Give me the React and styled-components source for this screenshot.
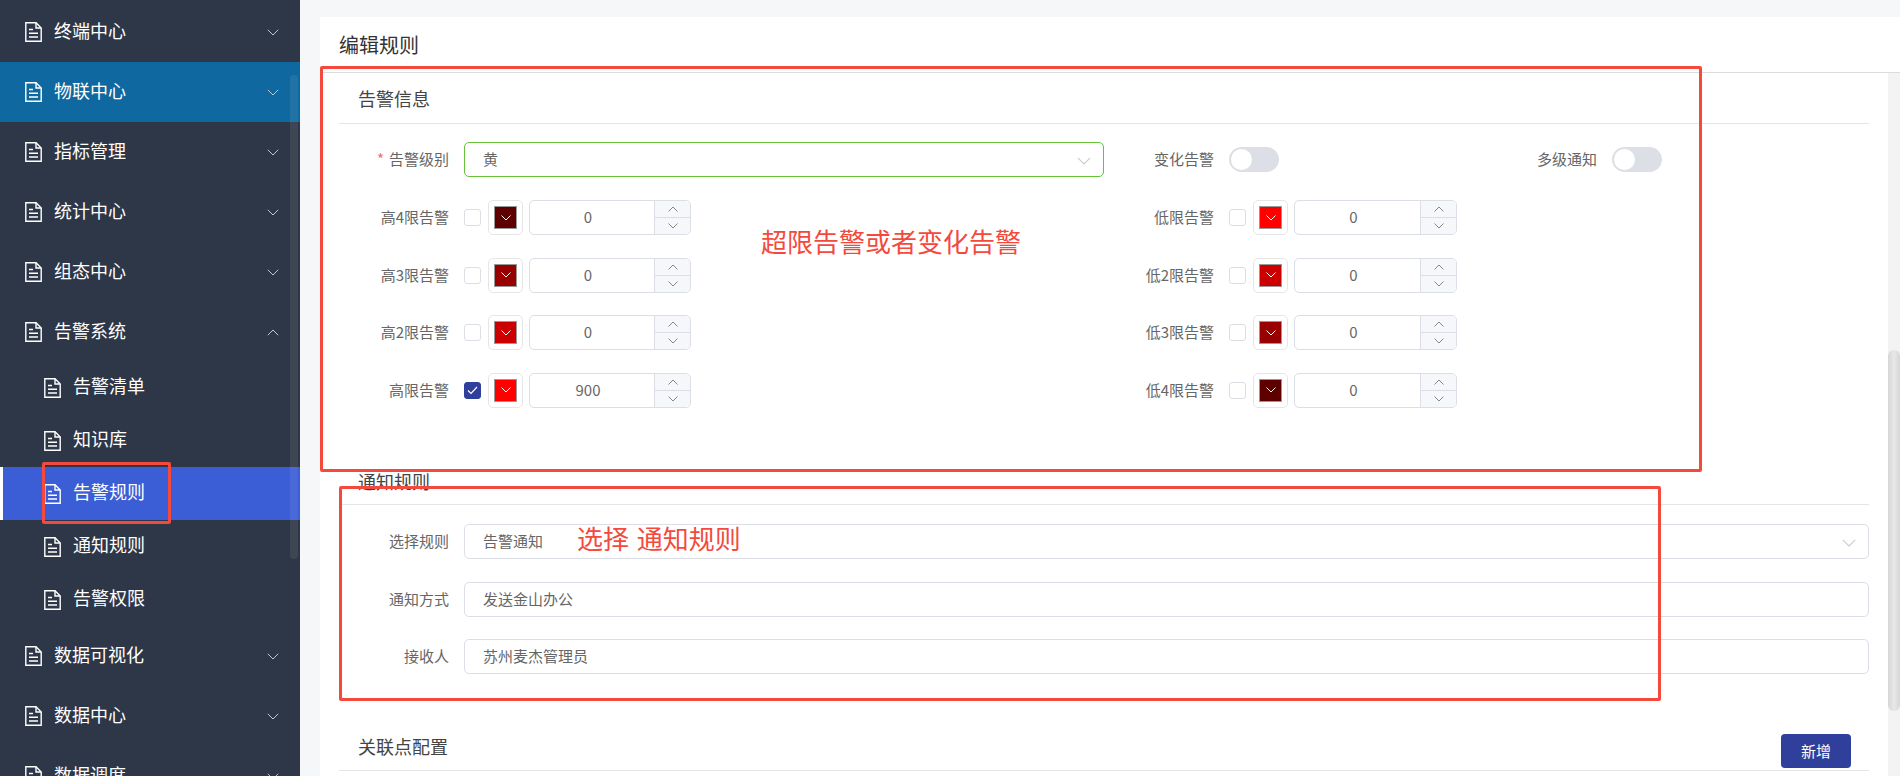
import React from "react";
import styled, { createGlobalStyle } from "styled-components";

const FONT = `"Noto Sans CJK SC", "Noto Sans", "Liberation Sans", sans-serif`;

const GlobalStyle = createGlobalStyle`
  html, body {
    margin: 0;
    height: 100%;
    overflow: hidden;
    font-family: ${FONT};
  }
  * {
    box-sizing: border-box;
  }
`;

const Shell = styled.div`
  position: relative;
  display: flex;
  width: 100%;
  height: 100vh;
  overflow: hidden;
`;

/* sidebar */
const Sidebar = styled.aside`
  position: relative;
  flex: 0 0 300px;
  padding-top: 2px;
  background: #2e3748;
  overflow: hidden;
`;

const SidebarThumb = styled.div`
  position: absolute;
  top: 75px;
  left: 290px;
  width: 8px;
  height: 484px;
  border-radius: 4px;
  background: rgba(255, 255, 255, 0.08);
`;

const MenuRow = styled.div`
  display: flex;
  align-items: center;
  height: 60px;
  padding-left: 25px;
  color: #fff;
  font-size: 18px;
  background: ${(p) => (p.$active ? "#0f689f" : "transparent")};
`;

const SubList = styled.div`
  margin-top: -1px;
`;

const SubRow = styled.div`
  display: flex;
  align-items: center;
  height: 53px;
  padding-left: ${(p) => (p.$active ? "41px" : "44px")};
  color: #fff;
  font-size: 18px;
  background: ${(p) => (p.$active ? "#3b5dd5" : "transparent")};
  border-left: ${(p) => (p.$active ? "3px solid #fff" : "none")};
`;

const MenuLabel = styled.span`
  flex: 1;
  margin-left: 12px;
  padding-bottom: 5px;
`;

const Chevron = styled.svg`
  flex: 0 0 auto;
  margin-right: 21px;
`;

const DocIcon = () => (
  <svg width="17" height="20" viewBox="0 0 17 20" fill="none" stroke="#fff" strokeWidth="1.4">
    <path d="M.8.8h10.2l5.2 5.2v13.2H.8z" />
    <path d="M11 .8V6h5.2" />
    <path d="M4 7.5h4M4 11.2h9M4 15h9" />
  </svg>
);

const MenuArrow = ({ up }) => (
  <Chevron width="12" height="7" viewBox="0 0 12 7" fill="none" stroke="#c3c7cf" strokeWidth="1">
    <path d={up ? "M.8 6.2 6 1l5.2 5.2" : "M.8.8 6 6l5.2-5.2"} />
  </Chevron>
);

const MenuItem = ({ label, active, up }) => (
  <MenuRow $active={active}>
    <DocIcon />
    <MenuLabel>{label}</MenuLabel>
    <MenuArrow up={up} />
  </MenuRow>
);

const SubItem = ({ label, active }) => (
  <SubRow $active={active}>
    <DocIcon />
    <MenuLabel>{label}</MenuLabel>
  </SubRow>
);

/* main */
const Main = styled.main`
  flex: 1;
  display: flex;
  flex-direction: column;
  min-width: 0;
  padding: 17px 0 0 20px;
  background: #f6f7f9;
`;

const Card = styled.div`
  flex: 1;
  display: flex;
  flex-direction: column;
  min-height: 0;
  background: #fff;
`;

const CardHeader = styled.div`
  flex: 0 0 56px;
  display: flex;
  align-items: center;
  padding: 0 19px 1px;
  font-size: 20px;
  color: #333;
  border-bottom: 1px solid #dcdcdc;
`;

const CardBody = styled.div`
  flex: 1;
  display: flex;
  min-height: 0;
  overflow: hidden;
`;

const Content = styled.div`
  flex: 1;
  min-width: 0;
  padding: 0 19px;
`;

const ScrollTrack = styled.div`
  flex: 0 0 12px;
  padding-top: 277px;
  background: #f3f3f3;
`;

const ScrollThumb = styled.div`
  height: 361px;
  border-radius: 6px;
  background: linear-gradient(90deg, #d6d6d6, #e8e8e8 50%, #d6d6d6);
`;

const TitleRow = styled.div`
  display: flex;
  align-items: flex-end;
  justify-content: space-between;
  height: ${(p) => p.$height || 51}px;
  padding: 0 18px 0 19px;
  border-bottom: 1px solid #e4e5e8;
`;

const SectionTitle = styled.h3`
  margin: 0;
  padding-bottom: ${(p) => p.$lift || 14}px;
  font-size: 18px;
  font-weight: 400;
  line-height: 20px;
  color: #444;
`;

const AddButton = styled.button`
  width: 70px;
  height: 34px;
  margin-bottom: 2px;
  padding: 0 0 2px;
  border: 0;
  border-radius: 4px;
  background: #303f9b;
  color: #fff;
  font-family: ${FONT};
  font-size: 15px;
`;

const LevelGrid = styled.div`
  display: grid;
  grid-template-columns: 765px 383px 1fr;
  margin-top: 18px;
`;

const LimitGrid = styled.div`
  display: grid;
  grid-template-columns: 765px 1fr;
  row-gap: 22.5px;
  margin-top: 23px;
`;

const NotifyStack = styled.div`
  display: flex;
  flex-direction: column;
  gap: 22.5px;
  margin: 19px 0 46px;
`;

const Field = styled.div`
  display: grid;
  grid-template-columns: 110px 1fr;
  column-gap: 15px;
  align-items: center;
  height: 35px;
`;

const Label = styled.label`
  padding-bottom: 2px;
  text-align: right;
  font-size: 15px;
  color: #666;
`;

const Required = styled.span`
  margin-right: 5px;
  color: #f56c6c;
`;

const TextBox = styled.div`
  display: flex;
  align-items: center;
  justify-content: space-between;
  height: 35px;
  padding: 0 12px 2px 18px;
  border: 1px solid ${(p) => (p.$focus ? "#67c23a" : "#dcdee6")};
  border-radius: 5px;
  background: #fff;
  font-size: 15px;
  color: #666;
`;

const SelectIcon = styled.svg`
  margin-top: 4px;
`;

const Switch = styled.div`
  width: 50px;
  height: 25px;
  padding: 2px;
  border-radius: 13px;
  background: #dcdfe6;
`;

const SwitchKnob = styled.div`
  width: 21px;
  height: 21px;
  border-radius: 50%;
  background: #fff;
`;

const Limit = styled.div`
  display: flex;
  align-items: center;
`;

const CheckBox = styled.div`
  display: flex;
  align-items: center;
  justify-content: center;
  width: 17px;
  height: 17px;
  margin-right: 7px;
  border: 1px solid ${(p) => (p.$checked ? "#303f9b" : "#dcdee6")};
  border-radius: 3px;
  background: ${(p) => (p.$checked ? "#303f9b" : "#fff")};
`;

const ColorBox = styled.div`
  display: flex;
  align-items: center;
  justify-content: center;
  width: 35px;
  height: 35px;
  margin-right: 6px;
  border: 1px solid #e6e6e6;
  border-radius: 5px;
`;

const ColorSwatch = styled.div`
  display: flex;
  align-items: center;
  justify-content: center;
  width: 23px;
  height: 23px;
  border: 1px solid #999;
  background: ${(p) => p.$color};
`;

const NumberBox = styled.div`
  display: flex;
  width: ${(p) => (p.$wide ? 163 : 162)}px;
  height: 35px;
  border: 1px solid #dcdee6;
  border-radius: 5px;
  overflow: hidden;
`;

const NumberValue = styled.div`
  flex: 1;
  display: flex;
  align-items: center;
  justify-content: center;
  padding: 0 8px 2px 0;
  font-size: 15px;
  color: #666;
`;

const Stepper = styled.div`
  flex: 0 0 36px;
  display: flex;
  flex-direction: column;
  border-left: 1px solid #dcdee6;
  background: #f5f7fa;
`;

const StepButton = styled.div`
  flex: 1;
  display: flex;
  align-items: center;
  justify-content: center;
  &:first-child {
    border-bottom: 1px solid #dcdee6;
  }
`;

const Arrow = ({ up, color = "#888", w = 10, h = 6 }) => (
  <svg width={w} height={h} viewBox="0 0 10 6" fill="none" stroke={color} strokeWidth="1" preserveAspectRatio="none">
    <path d={up ? "M.5 5.5 5 1l4.5 4.5" : "M.5.5 5 5 9.500.5"} />
  </svg>
);

const SelectArrow = () => (
  <SelectIcon width="14" height="8" viewBox="0 0 14 8" fill="none" stroke="#c8cbd3" strokeWidth="1.1">
    <path d="M.8.8 7 7l6.200-6.200" />
  </SelectIcon>
);

const LimitField = ({ label, color, value = 0, checked, wide }) => (
  <Field>
    <Label>{label}</Label>
    <Limit>
      <CheckBox $checked={checked}>
        {checked && (
          <svg width="11" height="9" viewBox="0 0 11 9" fill="none" stroke="#fff" strokeWidth="1.2">
            <path d="M1 4.500 4 7.500 10 1" />
          </svg>
        )}
      </CheckBox>
      <ColorBox>
        <ColorSwatch $color={color}>
          <Arrow color="#fff" />
        </ColorSwatch>
      </ColorBox>
      <NumberBox $wide={wide}>
        <NumberValue>{value}</NumberValue>
        <Stepper>
          <StepButton><Arrow up /></StepButton>
          <StepButton><Arrow /></StepButton>
        </Stepper>
      </NumberBox>
    </Limit>
  </Field>
);

/* red marks drawn over the screenshot */
const Mark = styled.div`
  position: absolute;
  left: ${(p) => p.$x}px;
  top: ${(p) => p.$y}px;
  width: ${(p) => p.$w}px;
  height: ${(p) => p.$h}px;
  border: 3px solid #f44a3e;
  border-radius: 2px;
  pointer-events: none;
`;

const Note = styled.div`
  position: absolute;
  left: ${(p) => p.$x}px;
  top: ${(p) => p.$y}px;
  font-size: 26px;
  line-height: 30px;
  word-spacing: 2px;
  white-space: pre;
  color: #f44a3e;
  pointer-events: none;
`;

const limits = [
  ["高4限告警", "#5f0000", "低限告警", "#ff0000"],
  ["高3限告警", "#990000", "低2限告警", "#cc0000"],
  ["高2限告警", "#cc0000", "低3限告警", "#990000"],
  ["高限告警", "#ff0000", "低4限告警", "#5f0000"],
];

export default function App() {
  return (
    <Shell>
      <GlobalStyle />
      <Sidebar>
        <MenuItem label="终端中心" />
        <MenuItem label="物联中心" active />
        <MenuItem label="指标管理" />
        <MenuItem label="统计中心" />
        <MenuItem label="组态中心" />
        <MenuItem label="告警系统" up />
        <SubList>
          <SubItem label="告警清单" />
          <SubItem label="知识库" />
          <SubItem label="告警规则" active />
          <SubItem label="通知规则" />
          <SubItem label="告警权限" />
        </SubList>
        <MenuItem label="数据可视化" />
        <MenuItem label="数据中心" />
        <MenuItem label="数据调度" />
        <SidebarThumb />
      </Sidebar>
      <Main>
        <Card>
          <CardHeader>编辑规则</CardHeader>
          <CardBody>
            <Content>
              <TitleRow>
                <SectionTitle $lift={15}>告警信息</SectionTitle>
              </TitleRow>
              <LevelGrid>
                <Field>
                  <Label><Required>*</Required>告警级别</Label>
                  <TextBox $focus>黄<SelectArrow /></TextBox>
                </Field>
                <Field>
                  <Label>变化告警</Label>
                  <Switch><SwitchKnob /></Switch>
                </Field>
                <Field>
                  <Label>多级通知</Label>
                  <Switch><SwitchKnob /></Switch>
                </Field>
              </LevelGrid>
              <LimitGrid>
                {limits.map(([highLabel, highColor, lowLabel, lowColor], i) => (
                  <React.Fragment key={highLabel}>
                    <LimitField
                      label={highLabel}
                      color={highColor}
                      checked={i === 3}
                      value={i === 3 ? 900 : 0}
                    />
                    <LimitField label={lowLabel} color={lowColor} wide />
                  </React.Fragment>
                ))}
              </LimitGrid>
              <TitleRow $height={97.5}>
                <SectionTitle $lift={13}>通知规则</SectionTitle>
              </TitleRow>
              <NotifyStack>
                <Field>
                  <Label>选择规则</Label>
                  <TextBox>告警通知<SelectArrow /></TextBox>
                </Field>
                <Field>
                  <Label>通知方式</Label>
                  <TextBox>发送金山办公</TextBox>
                </Field>
                <Field>
                  <Label>接收人</Label>
                  <TextBox>苏州麦杰管理员</TextBox>
                </Field>
              </NotifyStack>
              <TitleRow>
                <SectionTitle>关联点配置</SectionTitle>
                <AddButton>新增</AddButton>
              </TitleRow>
            </Content>
            <ScrollTrack>
              <ScrollThumb />
            </ScrollTrack>
          </CardBody>
        </Card>
      </Main>
      <Mark $x={320} $y={66} $w={1382} $h={406} />
      <Mark $x={339} $y={486} $w={1322} $h={215} />
      <Mark $x={42} $y={462} $w={129} $h={62} />
      <Note $x={761} $y={226}>超限告警或者变化告警</Note>
      <Note $x={577} $y={523}>选择 通知规则</Note>
    </Shell>
  );
}
